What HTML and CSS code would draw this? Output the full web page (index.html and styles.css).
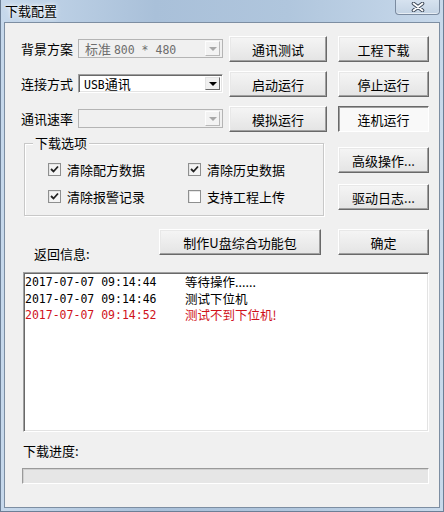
FILE: index.html
```html
<!DOCTYPE html>
<html lang="zh-CN">
<head>
  <meta charset="UTF-8">
  <title>下载配置</title>
  <link rel="stylesheet" href="styles.css">
</head>
<body>
  <div class="window">
    <div class="titlebar">
      <span class="title">下载配置</span>
      <button class="close-btn">
        <svg width="14" height="10" viewBox="0 0 14 10">
          <path d="M2.5 1.5 L11.5 8.5 M11.5 1.5 L2.5 8.5" stroke="#3b4656" stroke-width="3.6" stroke-linecap="round"/>
          <path d="M2.5 1.5 L11.5 8.5 M11.5 1.5 L2.5 8.5" stroke="#ffffff" stroke-width="1.8" stroke-linecap="round"/>
        </svg>
      </button>
    </div>

    <div class="client">
      <div class="top-grid">
        <!-- row 1 -->
        <div class="field">
          <span class="field-label">背景方案</span>
          <div class="combo disabled">
            <span class="combo-text">标准 <span class="mono">800 * 480</span></span>
            <span class="combo-arrow"><i></i></span>
          </div>
        </div>
        <button class="btn">通讯测试</button>
        <button class="btn">工程下载</button>

        <!-- row 2 -->
        <div class="field">
          <span class="field-label">连接方式</span>
          <div class="combo">
            <span class="combo-text"><span class="mono">USB</span>通讯</span>
            <span class="combo-arrow"><i></i></span>
          </div>
        </div>
        <button class="btn">启动运行</button>
        <button class="btn">停止运行</button>

        <!-- row 3 -->
        <div class="field">
          <span class="field-label">通讯速率</span>
          <div class="combo disabled">
            <span class="combo-text"></span>
            <span class="combo-arrow"><i></i></span>
          </div>
        </div>
        <button class="btn">模拟运行</button>
        <button class="btn pressed">连机运行</button>

        <!-- row 4 -->
        <div class="group">
          <span class="group-title">下载选项</span>
          <div class="check-grid">
            <label class="check"><span class="box checked"></span>清除配方数据</label>
            <label class="check"><span class="box checked"></span>清除历史数据</label>
            <label class="check"><span class="box checked"></span>清除报警记录</label>
            <label class="check"><span class="box"></span>支持工程上传</label>
          </div>
        </div>
        <div class="side-btns">
          <button class="btn">高级操作...</button>
          <button class="btn">驱动日志...</button>
        </div>

        <!-- row 5 -->
        <div class="info-row">
          <span class="info-label">返回信息:</span>
          <button class="btn pack-btn">制作U盘综合功能包</button>
        </div>
        <button class="btn ok-btn">确定</button>
      </div>

      <div class="log">
        <div class="log-line"><span class="log-time">2017-07-07 09:14:44</span><span class="log-msg">等待操作......</span></div>
        <div class="log-line"><span class="log-time">2017-07-07 09:14:46</span><span class="log-msg">测试下位机</span></div>
        <div class="log-line error"><span class="log-time">2017-07-07 09:14:52</span><span class="log-msg">测试不到下位机!</span></div>
      </div>

      <div class="progress-label">下载进度:</div>
      <div class="progress"></div>
    </div>
  </div>
</body>
</html>
```

FILE: styles.css
```css
/* Base */
* {
  margin: 0;
  padding: 0;
  box-sizing: border-box;
}

body {
  width: 444px;
  height: 512px;
  overflow: hidden;
  font-family: "Noto Sans CJK SC", "Noto Sans", sans-serif;
  font-size: 13px;
  color: #000;
}

.mono {
  font-family: "DejaVu Sans Mono", "Liberation Mono", monospace;
  font-size: 11.5px;
}

/* Window frame */
.window {
  width: 444px;
  height: 512px;
  padding: 0 3px 3px 3px;
  background: linear-gradient(to right, #c6d8eb 0%, #a9c0d9 35%, #b0c6dd 65%, #c8d9eb 100%);
  border: 1px solid #6c7f96;
  border-top: none;
  display: flex;
  flex-direction: column;
}

.titlebar {
  height: 22px;
  display: flex;
  align-items: flex-start;
  justify-content: space-between;
}

.title {
  margin: 4px 0 0 1px;
  line-height: 14px;
  text-shadow: 0 0 6px #fff, 0 0 3px #fff;
}

.close-btn {
  width: 45px;
  height: 15px;
  border: 1px solid #7b8ba0;
  border-top: none;
  border-radius: 0 0 4px 4px;
  background: linear-gradient(#d6e2ef, #c3d3e4);
  box-shadow: inset 0 -1px 0 rgba(255, 255, 255, 0.6);
  display: flex;
  align-items: center;
  justify-content: center;
}

/* Client area */
.client {
  flex: 1;
  background: #f0f0f0;
  border: 1px solid #7d8ea2;
  padding: 13px 12px 0 16px;
}

.top-grid {
  display: grid;
  grid-template-columns: 208px 109px 91px;
  grid-template-rows: 26px 26px 26px 75px 30px;
  row-gap: 9px;
}

/* Label + combo rows */
.field {
  display: flex;
  align-items: center;
}

.field-label {
  width: 57px;
  line-height: 14px;
}

.combo {
  width: 145px;
  height: 19px;
  margin-top: -1px;
  display: flex;
  background: #fff;
  border: 1px solid;
  border-color: #a0a0a0 #ffffff #ffffff #a0a0a0;
  box-shadow: inset 1px 1px 0 #696969, inset -1px -1px 0 #e3e3e3;
  padding: 2px;
}

.combo.disabled {
  background: #f0f0f0;
  border-color: #b4b4b4;
  box-shadow: none;
  padding: 1px 2px 1px 1px;
  color: #6d6d6d;
}

.combo-text {
  flex: 1;
  line-height: 14px;
  padding-left: 3px;
  white-space: nowrap;
}

.combo.disabled .combo-text {
  padding-left: 5px;
  line-height: 16px;
}

.combo-arrow {
  width: 15px;
  background: #f0f0f0;
  border: 1px solid;
  border-color: #e3e3e3 #696969 #696969 #e3e3e3;
  display: flex;
  align-items: center;
  justify-content: center;
}

.combo.disabled .combo-arrow {
  border-color: #fdfdfd #b8b8b8 #b8b8b8 #fdfdfd;
  background: #f3f3f3;
}

.combo-arrow i {
  width: 0;
  height: 0;
  border-left: 4px solid transparent;
  border-right: 4px solid transparent;
  border-top: 4px solid #000;
}

.combo.disabled .combo-arrow i {
  border-top-color: #a8a8a8;
}

/* Buttons */
.btn {
  font-family: inherit;
  font-size: 13px;
  color: #000;
  height: 26px;
  background: linear-gradient(#f5f5f5, #e4e4e4);
  border: 1px solid;
  border-color: #ffffff #696969 #696969 #ffffff;
  box-shadow: inset -1px -1px 0 #a0a0a0, inset 1px 1px 0 #e8e8e8;
  cursor: default;
}

.top-grid > .btn:nth-child(3n+2) {
  width: 98px;
}

.btn.pressed {
  background: #f9f9f9;
  border-color: #696969 #ffffff #ffffff #696969;
  box-shadow: inset 1px 1px 0 #a0a0a0;
}

/* Group box */
.group {
  grid-column: 1 / 3;
  position: relative;
  width: 300px;
  height: 73px;
  margin: 2px 0 0 3px;
  border: 1px solid #c8c8c8;
  box-shadow: inset 1px 1px 0 #fff, 1px 1px 0 #fff;
  padding: 19px 0 0 23px;
}

.group-title {
  position: absolute;
  top: -8px;
  left: 8px;
  padding: 0 2px;
  background: #f0f0f0;
  line-height: 14px;
}

.check-grid {
  display: grid;
  grid-template-columns: 140px 110px;
  row-gap: 14px;
}

.check {
  display: flex;
  align-items: center;
  height: 13px;
  line-height: 13px;
  white-space: nowrap;
}

.box {
  width: 13px;
  height: 13px;
  margin-right: 6px;
  border: 1px solid #8e8f8f;
  background: #fff;
  box-shadow: inset 1px 1px 0 #e6e6e6;
}

.box.checked {
  background: #f4f4f4 url("data:image/svg+xml,%3Csvg xmlns='http://www.w3.org/2000/svg' width='11' height='11'%3E%3Cpath d='M2 5 L4.5 7.5 L9 2.5' fill='none' stroke='%23222' stroke-width='1.8'/%3E%3C/svg%3E") no-repeat center;
}

.side-btns {
  display: flex;
  flex-direction: column;
  gap: 11px;
  padding-top: 6px;
}

/* Row 5 */
.info-row {
  grid-column: 1 / 3;
  display: flex;
  align-items: flex-end;
}

.info-label {
  margin: 0 0 -6px 13px;
  line-height: 14px;
}

.pack-btn {
  width: 162px;
  margin-left: auto;
  margin-right: 17px;
}

.ok-btn {
  margin-top: 4px;
}

/* Log list */
.log {
  width: 406px;
  height: 160px;
  margin: 17px 0 0 2px;
  background: #fff;
  border: 1px solid;
  border-color: #a0a0a0 #ffffff #ffffff #a0a0a0;
  box-shadow: inset 1px 1px 0 #696969, inset -1px -1px 0 #e3e3e3;
  padding: 1px 0 0 1px;
}

.log-line {
  display: flex;
  align-items: center;
  height: 16.5px;
  white-space: nowrap;
}

.log-time {
  width: 160px;
  font-family: "DejaVu Sans Mono", "Liberation Mono", monospace;
  font-size: 11.5px;
}

.log-msg {
  font-size: 12.5px;
  line-height: 14px;
}

.log-line.error {
  color: #d0121b;
}

/* Progress */
.progress-label {
  margin: 12px 0 0 2px;
  line-height: 14px;
}

.progress {
  width: 407px;
  height: 16px;
  margin: 10px 0 0 1px;
  background: #e6e6e6;
  border: 1px solid;
  border-color: #9a9a9a #ffffff #ffffff #9a9a9a;
  box-shadow: inset 1px 1px 0 #d0d0d0;
}
```
